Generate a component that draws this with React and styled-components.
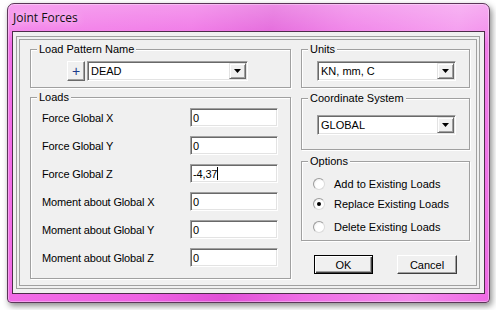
import React from 'react';
import styled, { createGlobalStyle } from 'styled-components';

const GlobalStyle = createGlobalStyle`
    html, body { margin: 0; padding: 0; background: #fff; }
    body {
        font-family: "Liberation Sans", Arial, sans-serif;
        font-size: 11px;
        color: #000;
    }
    * { box-sizing: border-box; }
`;

const Page = styled.div`
    width: 496px;
    height: 310px;
    padding: 3px 0 0 7px;
    overflow: hidden;
`;
const Window = styled.div`
    width: 483px;
    height: 300px;
    display: flex;
    flex-direction: column;
    padding: 0 4px 8px;
    border: 1px solid #5b3658;
    border-radius: 7px 7px 4px 4px;
    background:
        linear-gradient(to bottom, rgba(255,255,255,.35) 0, rgba(255,255,255,.18) 27px, rgba(255,255,255,0) 40px),
        linear-gradient(100deg, #f26fe7 0%, #ee62e3 35%, #e04fd6 50%, #ee6ee5 65%, #f38bec 85%, #ee6ae4 100%);
    box-shadow: 2px 3px 6px rgba(0,0,0,.45), inset 0 0 0 1px rgba(255,255,255,.35);
`;
const TitleBar = styled.div`
    height: 27px;
    display: flex;
    align-items: center;
    padding-left: 1px;
    font-family: "Open Sans", "Noto Sans", sans-serif;
    font-size: 12px;
    color: #111;
    text-shadow: 0 0 8px rgba(255,255,255,.9);
`;
const Client = styled.div`
    flex: 1;
    display: flex;
    border: 1px solid #4d2c4a;
    background: #f0f0f0;
    padding: 4px 4px 4px 3px;
`;
const Panel = styled.div`
    flex: 1;
    border: 1px solid #a0a0a0;
    box-shadow: inset 0 0 0 2px #f0f0f0, inset 0 0 0 3px #a0a0a0;
    padding: 12px 9px 0 13px;
    display: grid;
    grid-template-columns: 261px 169px;
    column-gap: 10px;
    align-items: start;
`;
const Column = styled.div`
    display: flex;
    flex-direction: column;
`;
const Group = styled.div`
    margin-top: ${p => p.$mt || 0}px;
    padding: 0 0 ${p => p.$pb}px ${p => p.$pl || 0}px;
    border: 1px solid #a0a0a0;
    box-shadow: 1px 1px 0 #fff, inset 1px 1px 0 #fff;
`;
const Legend = styled.div`
    width: fit-content;
    height: 13px;
    line-height: 13px;
    margin: -7px 0 0 ${p => 6 - (p.$pl || 0)}px;
    padding: 0 2px;
    background: #f0f0f0;
`;
const PatternRow = styled.div`
    display: flex;
    gap: 2px;
    margin-top: ${p => p.$mt}px;
`;
const SmallButton = styled.div`
    width: 18px;
    height: 20px;
    display: flex;
    align-items: center;
    justify-content: center;
    background: #f0f0f0;
    border: 1px solid;
    border-color: #fff #696969 #696969 #fff;
    box-shadow: inset -1px -1px 0 #a0a0a0;
    font-size: 14px;
    color: #1a3a8a;
`;
const Combo = styled.div`
    width: ${p => p.$w}px;
    height: 20px;
    display: flex;
    align-items: center;
    padding: 1px;
    background: #fff;
    border: 1px solid;
    border-color: #a0a0a0 #fff #fff #a0a0a0;
    box-shadow: inset 1px 1px 0 #696969, inset -1px -1px 0 #e3e3e3;
`;
const ComboText = styled.span`
    flex: 1;
    padding-left: 2px;
`;
const ComboButton = styled.div`
    width: 17px;
    height: 16px;
    display: flex;
    align-items: center;
    justify-content: center;
    background: #f0f0f0;
    border: 1px solid;
    border-color: #e3e3e3 #696969 #696969 #e3e3e3;
    box-shadow: inset 1px 1px 0 #fff, inset -1px -1px 0 #a0a0a0;
`;
const LoadRow = styled.div`
    display: grid;
    grid-template-columns: 148px 88px;
    align-items: center;
    padding-left: 11px;
    margin-top: ${p => p.$mt}px;
    letter-spacing: -0.15px;
`;
const Field = styled.div`
    height: 19px;
    display: flex;
    align-items: center;
    padding-left: 2px;
    background: #fff;
    border: 1px solid;
    border-color: #a0a0a0 #fff #fff #a0a0a0;
    box-shadow: inset 1px 1px 0 #696969, inset -1px -1px 0 #e3e3e3;
`;
const Caret = styled.span`
    display: inline-block;
    width: 1px;
    height: 13px;
    background: #000;
`;
const RadioRow = styled.div`
    display: flex;
    align-items: center;
    gap: 9px;
    height: 13px;
    padding-left: 11px;
    margin-top: ${p => p.$mt}px;
`;
const RadioDot = styled.span`
    width: 12px;
    height: 12px;
    display: flex;
    align-items: center;
    justify-content: center;
    border-radius: 50%;
    border: 1px solid;
    border-color: #9c9c9c #dcdcdc #dcdcdc #9c9c9c;
    background: radial-gradient(circle at 60% 60%, #fff 0, #fff 45%, #e4e4e4 100%);
    &::after {
        content: '';
        display: ${p => (p.$checked ? 'block' : 'none')};
        width: 4px;
        height: 4px;
        border-radius: 50%;
        background: #000;
    }
`;
const ButtonRow = styled.div`
    display: flex;
    gap: 24px;
    margin-top: 14px;
    padding-left: 13px;
`;
const Button = styled.button`
    width: ${p => p.$w}px;
    height: 19px;
    padding: 0;
    font: inherit;
    color: #000;
    background: #f0f0f0;
    border: 1px solid;
    border-color: ${p => (p.$default ? '#000' : '#fff #404040 #404040 #fff')};
    box-shadow: ${p =>
        p.$default
            ? 'inset 1px 1px 0 #fff, inset -1px -1px 0 #404040, inset -2px -2px 0 #a0a0a0'
            : 'inset -1px -1px 0 #a0a0a0'};
`;

const Arrow = () => (
    <svg width="7" height="4" viewBox="0 0 7 4">
        <path d="M0 0h7L3.5 4z" fill="#000" />
    </svg>
);

const Dropdown = ({ width, value }) => (
    <Combo $w={width}>
        <ComboText>{value}</ComboText>
        <ComboButton>
            <Arrow />
        </ComboButton>
    </Combo>
);

const loads = [
    ['Force Global X', '0'],
    ['Force Global Y', '0'],
    ['Force Global Z', '-4,37', true],
    ['Moment about Global X', '0'],
    ['Moment about Global Y', '0'],
    ['Moment about Global Z', '0'],
];

const options = [
    ['Add to Existing Loads', false, 9],
    ['Replace Existing Loads', true, 7],
    ['Delete Existing Loads', false, 10],
];

export default function App() {
    return (
        <Page>
            <GlobalStyle />
            <Window>
                <TitleBar>Joint Forces</TitleBar>
                <Client>
                    <Panel>
                        <Column>
                            <Group $pb={6} $pl={36}>
                                <Legend $pl={36}>Load Pattern Name</Legend>
                                <PatternRow $mt={5}>
                                    <SmallButton>+</SmallButton>
                                    <Dropdown width={161} value="DEAD" />
                                </PatternRow>
                            </Group>
                            <Group $mt={9} $pb={11}>
                                <Legend>Loads</Legend>
                                {loads.map(([label, value, caret], i) => (
                                    <LoadRow key={label} $mt={i === 0 ? 4 : 9}>
                                        <span>{label}</span>
                                        <Field>
                                            {value}
                                            {caret && <Caret />}
                                        </Field>
                                    </LoadRow>
                                ))}
                            </Group>
                        </Column>
                        <Column>
                            <Group $pb={6} $pl={15}>
                                <Legend $pl={15}>Units</Legend>
                                <PatternRow $mt={5}>
                                    <Dropdown width={139} value="KN, mm, C" />
                                </PatternRow>
                            </Group>
                            <Group $mt={10} $pb={14} $pl={15}>
                                <Legend $pl={15}>Coordinate System</Legend>
                                <PatternRow $mt={10}>
                                    <Dropdown width={139} value="GLOBAL" />
                                </PatternRow>
                            </Group>
                            <Group $mt={11} $pb={7}>
                                <Legend>Options</Legend>
                                {options.map(([label, checked, mt]) => (
                                    <RadioRow key={label} $mt={mt}>
                                        <RadioDot $checked={checked} />
                                        <span>{label}</span>
                                    </RadioRow>
                                ))}
                            </Group>
                            <ButtonRow>
                                <Button $w={59} $default>OK</Button>
                                <Button $w={60}>Cancel</Button>
                            </ButtonRow>
                        </Column>
                    </Panel>
                </Client>
            </Window>
        </Page>
    );
}
